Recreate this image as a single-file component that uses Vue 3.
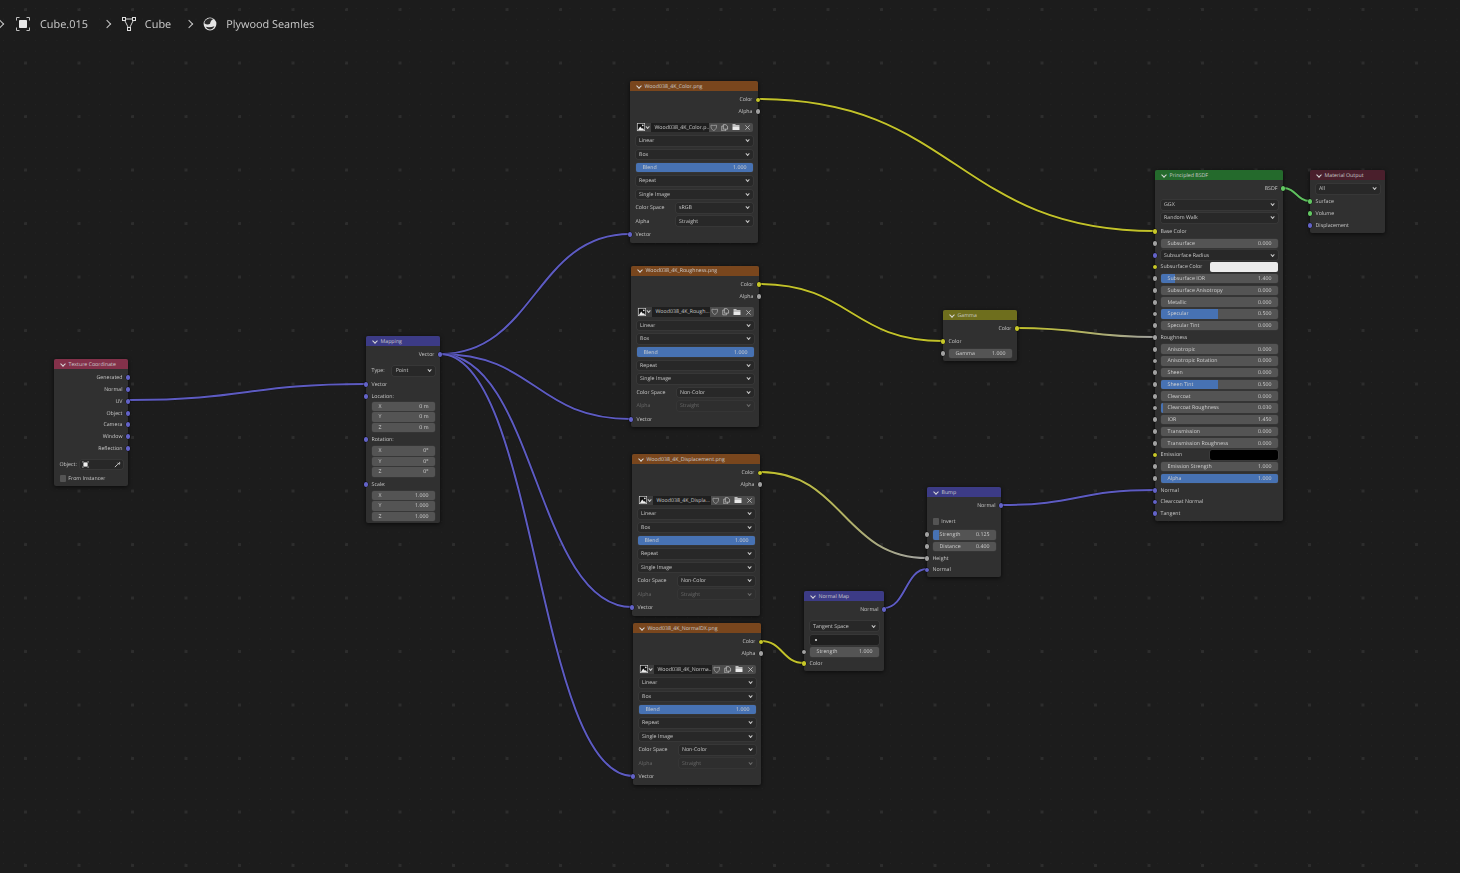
<template>
  <div class="editor">
    <!-- breadcrumbs -->
    <div class="crumbs">
      <span class="chev-right first"></span>
      <svg class="crumb-icon obj" viewBox="0 0 14 14" width="14" height="14">
        <path d="M0.5 3.5V0.5H3.5M10.5 0.5H13.5V3.5M13.5 10.5V13.5H10.5M3.5 13.5H0.5V10.5" fill="none" stroke="#bdbdbd" stroke-width="1" />
        <rect x="3" y="3" width="8" height="8" rx="0.8" fill="#e6e6e6" />
      </svg>
      <span class="crumb-text t1">Cube.015</span>
      <span class="chev-right c1"></span>
      <svg class="crumb-icon mesh" viewBox="0 0 14 14" width="14" height="14">
        <path d="M2 2H12L7 12Z" fill="none" stroke="#d0d0d0" stroke-width="1" />
        <rect x="0.5" y="0.5" width="3" height="3" fill="#1c1c1c" stroke="#e0e0e0" />
        <rect x="10.5" y="0.5" width="3" height="3" fill="#1c1c1c" stroke="#e0e0e0" />
        <rect x="5.5" y="10.5" width="3" height="3" fill="#1c1c1c" stroke="#e0e0e0" />
      </svg>
      <span class="crumb-text t2">Cube</span>
      <span class="chev-right c2"></span>
      <svg class="crumb-icon mat" viewBox="0 0 14 14" width="14" height="14">
        <circle cx="7" cy="7" r="6.4" fill="#e4e4e4" />
        <path d="M1.4 6.2C3 7.6 5.4 7.8 7 6.8C7.4 4.4 8.6 2.4 10.4 1.9C8 0.6 5 1 3.2 2.8C2 4 1.5 5 1.4 6.2Z" fill="#2a2a2a" />
        <path d="M2.8 9.8C5 10.6 8.4 10.4 11.4 9.2C10.8 11 9 12.4 7 12.4C5.2 12.4 3.6 11.4 2.8 9.8Z" fill="#2a2a2a" />
      </svg>
      <span class="crumb-text t3">Plywood Seamles</span>
    </div>

    <!-- noodles, under the nodes -->
    <svg class="links" width="1460" height="873">
      <defs>
        <linearGradient v-for="l in gradientLinks" :id="l.id" :key="l.id" gradientUnits="userSpaceOnUse" :x1="l.from[0]" :y1="l.from[1]" :x2="l.to[0]" :y2="l.to[1]">
          <stop offset="0" stop-color="#c2c22a" />
          <stop offset="1" stop-color="#a1a1a1" />
        </linearGradient>
      </defs>
      <g v-for="(l, i) in links" :key="i">
        <path :d="linkPath(l)" class="link-shadow" />
        <path :d="linkPath(l)" class="link" :stroke="l.id ? `url(#${l.id})` : colors[l.color]" />
      </g>
    </svg>

    <div
      v-for="node in nodes"
      :key="node.title"
      class="node"
      :class="node.kind"
      :style="{ left: node.x + 'px', top: node.y + 'px', width: node.w + 'px' }"
    >
      <div class="node-head" :class="node.head">
        <span class="chev-down"></span>
        <span class="node-title">{{ node.title }}</span>
      </div>
      <div class="node-body">
        <div v-for="(row, i) in node.rows" :key="i" class="row" :class="['row-' + row.type, row.gap]">
          <span v-if="row.in" class="sock left" :class="row.in"></span>
          <span v-if="row.out" class="sock right" :class="row.out"></span>

          <span v-if="row.type === 'out'" class="txt out-label">{{ row.label }}</span>
          <span v-else-if="row.type === 'in'" class="txt">{{ row.label }}</span>

          <template v-else-if="row.type === 'slider' || row.type === 'vec'">
            <div class="field num">
              <div v-if="row.fill" class="fill" :style="{ width: row.fill + '%' }"></div>
              <span class="txt num-label">{{ row.label }}</span>
              <span class="txt num-value">{{ row.value }}</span>
            </div>
          </template>

          <template v-else-if="row.type === 'select'">
            <span v-if="row.label" class="txt lbl" :class="{ dim: row.off }">{{ row.label }}</span>
            <div class="field drop" :class="{ off: row.off }">
              <span class="txt" :class="{ dim: row.off }">{{ row.value }}</span>
              <span class="chev-small"></span>
            </div>
          </template>

          <template v-else-if="row.type === 'swatch'">
            <span class="txt lbl">{{ row.label }}</span>
            <div class="field swatch-box" :class="row.tone"></div>
          </template>

          <template v-else-if="row.type === 'picker'">
            <span class="txt lbl">{{ row.label }}</span>
            <div class="field drop picker-box">
              <svg viewBox="0 0 8 8" width="7" height="7">
                <path d="M0.5 2V0.5H2M6 0.5H7.5V2M7.5 6V7.5H6M2 7.5H0.5V6" fill="none" stroke="#bbb" stroke-width="0.6" />
                <rect x="1.6" y="1.6" width="4.8" height="4.8" fill="#eee" />
              </svg>
              <svg class="dropper" viewBox="0 0 8 8" width="7" height="7">
                <path d="M1 7L4.4 3.6M4 2L6 4M5 3L6.4 1.6A0.9 0.9 0 0 1 6.9 2.6L5.6 3.8" fill="none" stroke="#d8d8d8" stroke-width="1" />
              </svg>
            </div>
          </template>

          <template v-else-if="row.type === 'check'">
            <span class="checkbox"></span>
            <span class="txt">{{ row.label }}</span>
          </template>

          <div v-else-if="row.type === 'uv'" class="field uv-box"><span class="uv-dot"></span></div>

          <div v-else-if="row.type === 'image'" class="img-row">
            <div class="img-pick">
              <svg viewBox="0 0 8 8" width="8" height="8">
                <rect x="0.3" y="0.3" width="7.4" height="7.4" fill="#151515" stroke="#ddd" stroke-width="0.6" />
                <path d="M0.8 7.2L3.2 3.4L5 5.8L5.8 5L7.2 7.2Z" fill="#eee" />
                <circle cx="5.8" cy="2.4" r="0.8" fill="#eee" />
              </svg>
              <span class="chev-small tiny"></span>
            </div>
            <div class="img-name"><span class="txt">{{ row.value }}</span></div>
            <div class="img-btn">
              <svg viewBox="0 0 8 8" width="7.5" height="7.5"><path d="M1 1.3C3 1.6 5 1.6 7 1.3C7.2 4 6.2 6 4 7C1.8 6 0.8 4 1 1.3Z" fill="none" stroke="#a8a8a8" stroke-width="0.8" /></svg>
            </div>
            <div class="img-btn">
              <svg viewBox="0 0 8 8" width="7.5" height="7.5"><path d="M2.5 5.5V0.7H5.2L7 2.4V5.5ZM2.5 2.2H0.8V7.3H5V5.5" fill="none" stroke="#d0d0d0" stroke-width="0.7" /></svg>
            </div>
            <div class="img-btn">
              <svg viewBox="0 0 8 8" width="8" height="8"><path d="M0.5 1.2H3.2L3.9 2H7.5V2.8H0.5ZM0.5 3.3H7.5V7H0.5Z" fill="#e8e8e8" /></svg>
            </div>
            <div class="img-btn">
              <svg viewBox="0 0 8 8" width="7" height="7"><path d="M1.5 1.5L6.5 6.5M6.5 1.5L1.5 6.5" fill="none" stroke="#c8c8c8" stroke-width="0.9" /></svg>
            </div>
          </div>
        </div>
      </div>
    </div>
  </div>
</template>

<script setup>
const colors = { yellow: '#c2c22a', purple: '#5d5bc2', green: '#5fc05f' }

// helpers for the node rows
const out = (label, sock, gap) => ({ type: 'out', label, out: sock, gap })
const inp = (label, sock, gap) => ({ type: 'in', label, in: sock, gap })
const slider = (label, value, fill, sock = 'gray', gap) => ({ type: 'slider', label, value, fill, in: sock, gap })
const select = (value, label, gap, off) => ({ type: 'select', value, label, gap, off })
const vec = (label, value, gap) => ({ type: 'vec', label, value, gap })

const imageNode = (x, y, title, name, space, alphaOff) => ({
  kind: 'node-image',
  head: 'brown',
  title,
  x,
  y,
  w: 128,
  rows: [
    out('Color', 'yellow'),
    out('Alpha', 'gray'),
    { type: 'image', value: name, gap: 'mt3' },
    select('Linear'),
    select('Box'),
    { type: 'slider', label: 'Blend', value: '1.000', fill: 100 },
    select('Repeat'),
    select('Single Image'),
    select(space, 'Color Space'),
    select('Straight', 'Alpha', undefined, alphaOff),
    inp('Vector', 'purple')
  ]
})

const nodes = [
  {
    kind: 'node-small',
    head: 'pink',
    title: 'Texture Coordinate',
    x: 54,
    y: 359,
    w: 74,
    rows: [
      out('Generated', 'purple'),
      out('Normal', 'purple'),
      out('UV', 'purple'),
      out('Object', 'purple'),
      out('Camera', 'purple'),
      out('Window', 'purple'),
      out('Reflection', 'purple'),
      { type: 'picker', label: 'Object:', gap: 'mt4' },
      { type: 'check', label: 'From Instancer', gap: 'mt2' }
    ]
  },
  {
    kind: 'node-small',
    head: 'blue',
    title: 'Mapping',
    x: 366,
    y: 336,
    w: 74,
    rows: [
      out('Vector', 'purple'),
      select('Point', 'Type:', 'mt4'),
      inp('Vector', 'purple', 'mt2'),
      inp('Location:', 'purple'),
      vec('X', '0 m', 'mtn1'),
      vec('Y', '0 m'),
      vec('Z', '0 m'),
      inp('Rotation:', 'purple', 'mt1'),
      vec('X', '0°'),
      vec('Y', '0°'),
      vec('Z', '0°'),
      inp('Scale:', 'purple', 'mt1'),
      vec('X', '1.000'),
      vec('Y', '1.000'),
      vec('Z', '1.000')
    ]
  },
  imageNode(630, 81, 'Wood038_4K_Color.png', 'Wood038_4K_Color.p...', 'sRGB', false),
  imageNode(631, 265.6, 'Wood038_4K_Roughness.png', 'Wood038_4K_Rough...', 'Non-Color', true),
  imageNode(632, 454, 'Wood038_4K_Displacement.png', 'Wood038_4K_Displa...', 'Non-Color', true),
  imageNode(633, 623, 'Wood038_4K_NormalDX.png', 'Wood038_4K_Norma...', 'Non-Color', true),
  {
    kind: 'node-small',
    head: 'olive',
    title: 'Gamma',
    x: 943,
    y: 310,
    w: 74,
    rows: [out('Color', 'yellow'), inp('Color', 'yellow', 'mt1'), slider('Gamma', '1.000')]
  },
  {
    kind: 'node-small',
    head: 'blue',
    title: 'Bump',
    x: 927,
    y: 487,
    w: 74,
    rows: [
      out('Normal', 'purple'),
      { type: 'check', label: 'Invert', gap: 'mt4' },
      slider('Strength', '0.125', 10, 'gray', 'mt1'),
      slider('Distance', '0.400', 0),
      inp('Height', 'gray'),
      inp('Normal', 'purple')
    ]
  },
  {
    kind: 'node-small',
    head: 'blue',
    title: 'Normal Map',
    x: 804,
    y: 591,
    w: 80,
    rows: [
      out('Normal', 'purple'),
      select('Tangent Space', undefined, 'mt5'),
      { type: 'uv', gap: 'mt2' },
      slider('Strength', '1.000', 0),
      inp('Color', 'yellow')
    ]
  },
  {
    kind: 'node-principled',
    head: 'green',
    title: 'Principled BSDF',
    x: 1155,
    y: 170,
    w: 128,
    rows: [
      out('BSDF', 'green'),
      select('GGX', undefined, 'mt4'),
      select('Random Walk', undefined, 'mt1'),
      inp('Base Color', 'yellow', 'mt2'),
      slider('Subsurface', '0.000', 0),
      { ...select('Subsurface Radius'), in: 'purple' },
      { type: 'swatch', label: 'Subsurface Color', in: 'yellow', tone: 'white' },
      slider('Subsurface IOR', '1.400', 12),
      slider('Subsurface Anisotropy', '0.000', 0),
      slider('Metallic', '0.000', 0),
      slider('Specular', '0.500', 49),
      slider('Specular Tint', '0.000', 0),
      inp('Roughness', 'gray'),
      slider('Anisotropic', '0.000', 0),
      slider('Anisotropic Rotation', '0.000', 0),
      slider('Sheen', '0.000', 0),
      slider('Sheen Tint', '0.500', 49),
      slider('Clearcoat', '0.000', 0),
      slider('Clearcoat Roughness', '0.030', 2),
      slider('IOR', '1.450', 0),
      slider('Transmission', '0.000', 0),
      slider('Transmission Roughness', '0.000', 0),
      { type: 'swatch', label: 'Emission', in: 'yellow', tone: 'black' },
      slider('Emission Strength', '1.000', 0),
      slider('Alpha', '1.000', 100),
      inp('Normal', 'purple'),
      inp('Clearcoat Normal', 'purple'),
      inp('Tangent', 'purple')
    ]
  },
  {
    kind: 'node-small',
    head: 'wine',
    title: 'Material Output',
    x: 1310,
    y: 170,
    w: 75,
    rows: [
      select('All'),
      inp('Surface', 'green', 'mt1'),
      inp('Volume', 'green'),
      inp('Displacement', 'purple')
    ]
  }
]

const links = [
  { from: [129, 400], to: [366, 384], color: 'purple' },
  { from: [440, 354], to: [630, 234], color: 'purple' },
  { from: [440, 354], to: [631, 419], color: 'purple' },
  { from: [440, 354], to: [632, 607], color: 'purple' },
  { from: [440, 354], to: [633, 776], color: 'purple' },
  { from: [758, 99], to: [1155, 231], color: 'yellow' },
  { from: [759, 284], to: [943, 341], color: 'yellow' },
  { from: [1017, 328], to: [1155, 337], id: 'fade-rough' },
  { from: [760, 472], to: [927, 558], id: 'fade-height' },
  { from: [761, 641], to: [804, 663], color: 'yellow' },
  { from: [884, 608], to: [927, 569], color: 'purple' },
  { from: [1001, 505], to: [1155, 490], color: 'purple' },
  { from: [1283, 188], to: [1310, 201], color: 'green' }
]

const gradientLinks = links.filter((l) => l.id)

const linkPath = ({ from, to }) => {
  const h = (to[0] - from[0]) * 0.5
  return `M${from[0]} ${from[1]}C${from[0] + h} ${from[1]} ${to[0] - h} ${to[1]} ${to[0]} ${to[1]}`
}
</script>

<style>
body {
  background: #1c1c1c;
  overflow: hidden;
}
</style>

<style scoped>
.editor {
  position: relative;
  width: 1460px;
  height: 873px;
  overflow: hidden;
  background-color: #1c1c1c;
  font-family: "Open Sans", sans-serif;
  text-rendering: geometricPrecision;
}
/* big and small grid dots */
.editor::before {
  content: '';
  position: absolute;
  inset: 0;
  background-image: radial-gradient(circle at 1.5px 1.5px, #2d2d2d 1.4px, transparent 1.6px);
  background-size: 53.5px 53.5px;
  background-position: 24px 8px;
}
.editor::after {
  content: '';
  position: absolute;
  inset: 0;
  z-index: 0;
  background-image: radial-gradient(circle at 0.5px 0.5px, #232323 0.6px, transparent 0.7px);
  background-size: 10.7px 10.7px;
  background-position: 3px 8px;
}

/* breadcrumbs */
.crumbs {
  position: relative;
  z-index: 3;
  display: flex;
  align-items: center;
  height: 48px;
  color: #cccccc;
  filter: blur(0.25px);
}
.crumb-icon {
  flex: none;
}
.crumb-icon.obj {
  margin-left: 13px;
}
.crumb-text {
  margin-left: 9px;
  font-size: 10.9px;
  white-space: nowrap;
}
.t1 {
  margin-left: 10px;
}
.chev-right {
  flex: none;
  width: 5px;
  height: 5px;
  border-top: 1px solid #c8c8c8;
  border-right: 1px solid #c8c8c8;
  transform: rotate(45deg);
}
.chev-right.first {
  margin-left: -3px;
}
.chev-right.c1 {
  margin-left: 16px;
  margin-right: 12px;
}
.chev-right.c2 {
  margin-left: 15px;
  margin-right: 11px;
}

.links {
  position: absolute;
  left: 0;
  top: 0;
  z-index: 1;
  filter: blur(0.25px);
}
.link {
  fill: none;
  stroke-width: 2;
  stroke-linecap: round;
}
.link-shadow {
  fill: none;
  stroke: rgba(0, 0, 0, 0.35);
  stroke-width: 3.2;
}

/* nodes */
.node {
  position: absolute;
  z-index: 2;
  background: #303030;
  border-radius: 2px;
  box-shadow: 0 1px 4px rgba(0, 0, 0, 0.65);
  color: #c8c8c8;
  font-size: 5.25px;
  line-height: 1;
  filter: blur(0.25px);
}
.node-head {
  display: flex;
  align-items: center;
  height: 10px;
  padding-left: 7px;
  border-radius: 2px 2px 0 0;
  color: #cccccc;
}
.node-title {
  margin-left: 3.5px;
  padding-top: 1px;
  white-space: nowrap;
}
.chev-down {
  width: 3px;
  height: 3px;
  margin-top: -1px;
  border-right: 0.5px solid #d8d8d8;
  border-bottom: 0.5px solid #d8d8d8;
  transform: rotate(45deg);
}
.pink { background: #83314a; }
.blue { background: #3c3b86; }
.brown { background: #79461d; }
.olive { background: #6e6e1d; }
.green { background: #246a2c; }
.wine { background: #4a1f2c; }

.node-body {
  padding: 3px 0 1.6px;
}
.row {
  position: relative;
  display: flex;
  align-items: center;
  height: 11.75px;
  padding: 0 5.5px;
}
.node-image .row {
  height: 13.4px;
}
.node-image .row.row-out {
  height: 11.8px;
}
.row.row-vec {
  height: 10.5px;
}
.mt1 { margin-top: 1.2px; }
.mt2 { margin-top: 2.2px; }
.mt3 { margin-top: 3.2px; }
.mt4 { margin-top: 4.2px; }
.mt5 { margin-top: 4.6px; }
.mtn1 { margin-top: -1.1px; }

.txt {
  white-space: nowrap;
}
.dim {
  color: #6a6a6a;
}
.out-label {
  margin-left: auto;
}
.lbl {
  flex: none;
  width: 20.7px;
}
.node-image .lbl {
  width: 40px;
}
.node-principled .lbl {
  width: 49px;
}

.sock {
  position: absolute;
  top: 50%;
  width: 4.8px;
  height: 4.8px;
  margin-top: -2.4px;
  border-radius: 50%;
  box-shadow: 0 0 0 0.4px rgba(0, 0, 0, 0.7);
}
.sock.left {
  left: -2.4px;
}
.sock.right {
  right: -2.4px;
}
.sock.purple { background: #6363c7; }
.sock.yellow { background: #c7c729; }
.sock.gray { background: #a1a1a1; }
.sock.green { background: #63c763; }

/* fields */
.field {
  position: relative;
  display: flex;
  flex: 1;
  align-items: center;
  height: 9.5px;
  min-width: 0;
  border-radius: 2px;
}
.num {
  background: #545454;
  color: #d0d0d0;
  box-shadow: 0 0 0 0.5px #3a3a3a;
  overflow: hidden;
}
.fill {
  position: absolute;
  left: 0;
  top: 0;
  bottom: 0;
  background: #4772b3;
}
.num-label {
  position: relative;
  padding-left: 7px;
}
.num-value {
  position: relative;
  margin-left: auto;
  padding-right: 6px;
}
.drop {
  padding: 0 2.5px 0 3.5px;
  background: #282828;
  box-shadow: 0 0 0 0.5px #3f3f3f;
  color: #c8c8c8;
}
.drop.off {
  background: #2e2e2e;
  box-shadow: 0 0 0 0.5px #3a3a3a;
}
.chev-small {
  flex: none;
  width: 2.2px;
  height: 2.2px;
  margin-left: auto;
  margin-right: 1px;
  border-right: 0.7px solid #c8c8c8;
  border-bottom: 0.7px solid #c8c8c8;
  transform: rotate(45deg) translate(-0.5px, -0.5px);
}
.drop.off .chev-small {
  border-color: #6a6a6a;
}
.chev-small.tiny {
  margin-left: 1px;
  margin-right: 0;
}
.swatch-box.white {
  background: #ececec;
}
.swatch-box.black {
  background: #000000;
  box-shadow: 0 0 0 0.5px #444;
}
.picker-box {
  justify-content: space-between;
  padding: 0 1.5px 0 1.5px;
}
.checkbox {
  flex: none;
  width: 6.8px;
  height: 6.8px;
  margin-right: 2px;
  border-radius: 1px;
  background: #545454;
}
.uv-box {
  padding-left: 5px;
  background: #1f1f1f;
  box-shadow: 0 0 0 0.5px #3f3f3f;
}
.uv-dot {
  width: 2px;
  height: 2px;
  background: #e8e8e8;
  border-radius: 50%;
}

/* image datablock row */
.img-row {
  display: flex;
  flex: 1;
  align-items: center;
  height: 9.8px;
  min-width: 0;
}
.img-pick {
  display: flex;
  flex: none;
  align-items: center;
  justify-content: center;
  width: 15.5px;
  height: 100%;
  background: #3e3e3e;
  border-radius: 2px 0 0 2px;
}
.img-name {
  display: flex;
  flex: 1;
  align-items: center;
  height: 100%;
  min-width: 0;
  padding-left: 3.5px;
  background: #1f1f1f;
  color: #c8c8c8;
}
.img-btn {
  display: flex;
  flex: none;
  align-items: center;
  justify-content: center;
  width: 10.7px;
  height: 100%;
  background: #4c4c4c;
  margin-left: 0.3px;
}
.img-btn:last-child {
  border-radius: 0 2px 2px 0;
}
</style>
